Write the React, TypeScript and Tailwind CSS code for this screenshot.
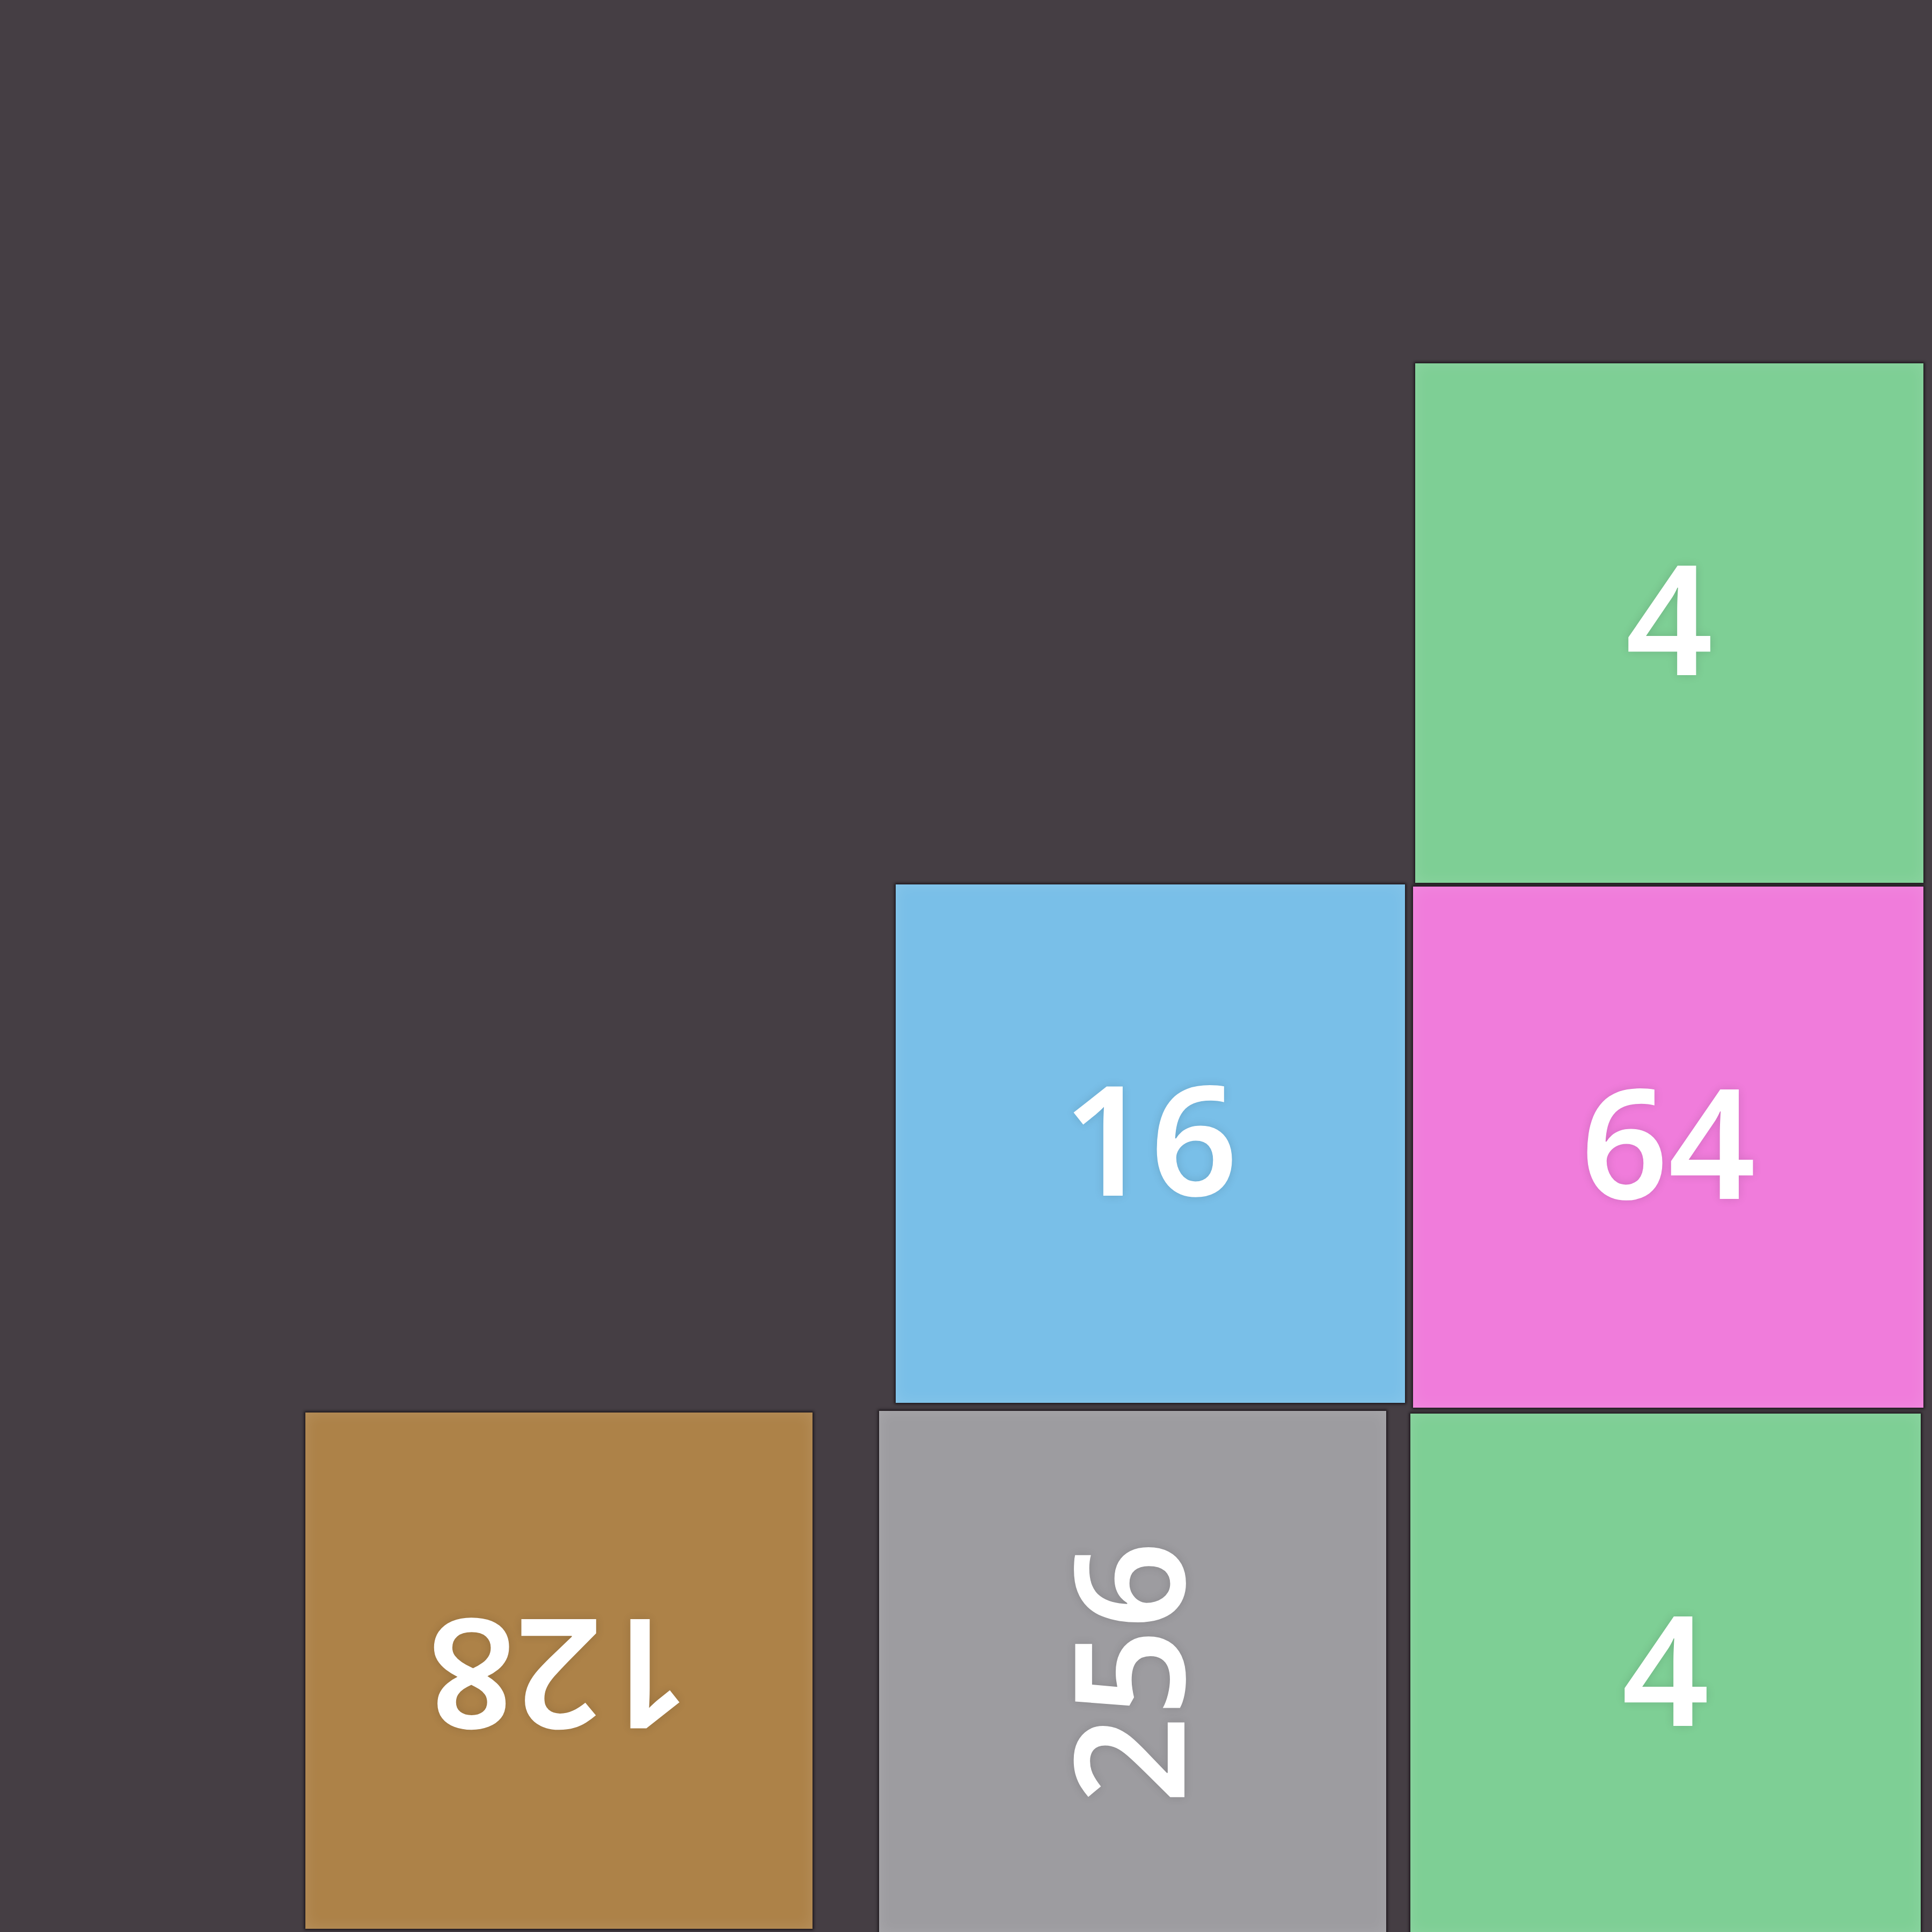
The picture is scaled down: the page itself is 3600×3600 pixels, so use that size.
import clsx from 'clsx';

type TileProps = {
  value: number;
  className: string;
  labelClassName?: string;
};

// A single board cell; size, colour and offset come in through className.
function Tile({ value, className, labelClassName }: TileProps) {
  return (
    <div
      className={clsx(
        'flex shrink-0 items-center justify-center shadow-[0_0_5px_2px_rgba(10,6,10,0.75),inset_0_0_28px_rgba(255,255,255,0.12)]',
        className,
      )}
    >
      <span className={clsx('block', labelClassName)}>
        {/* the glyphs sit low in the line box, nudge them back to the optical centre */}
        <span className="block -translate-y-[14px] select-none text-[285px] font-semibold leading-none text-white [font-family:'Noto_Sans','DejaVu_Sans',sans-serif] [text-shadow:0_0_18px_rgba(0,0,0,0.12)]">
          {value}
        </span>
      </span>
    </div>
  );
}

export default function App() {
  return (
    <div className="flex h-[3600px] w-[3600px] flex-col overflow-hidden bg-[#453e44] pt-[677px]">
      <div className="flex items-start">
        <Tile value={4} className="ml-[2637px] h-[968px] w-[947px] bg-[#7ecf95]" />
      </div>

      <div className="mt-[3px] flex items-start">
        <Tile value={16} className="ml-[1669px] h-[966px] w-[949px] bg-[#79bfe8]" />
        <Tile value={64} className="ml-[15px] mt-[4px] h-[971px] w-[951px] bg-[#f07cdb]" />
      </div>

      <div className="mt-[6px] flex items-start">
        <Tile
          value={128}
          className="ml-[569px] mt-[3px] h-[962px] w-[945px] bg-[#ad8248]"
          labelClassName="rotate-180"
        />
        <Tile
          value={256}
          className="ml-[124px] h-[975px] w-[945px] bg-[#9d9ca0]"
          labelClassName="-rotate-90"
        />
        <Tile value={4} className="ml-[45px] mt-[5px] h-[970px] w-[951px] bg-[#7ecf95]" />
      </div>
    </div>
  );
}
